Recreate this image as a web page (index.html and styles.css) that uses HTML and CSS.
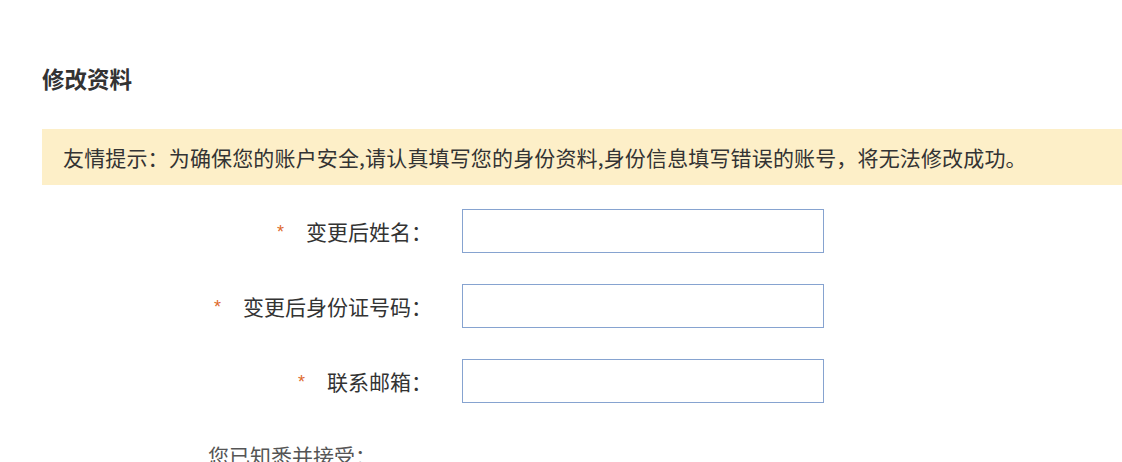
FILE: index.html
```html
<!DOCTYPE html>
<html lang="zh-CN">
<head>
<meta charset="utf-8">
<title>修改资料</title>
<link rel="stylesheet" href="styles.css">
</head>
<body>
<div class="page">
  <h2 class="title">修改资料</h2>
  <div class="notice">友情提示：为确保您的账户安全,请认真填写您的身份资料,身份信息填写错误的账号，将无法修改成功。</div>
  <form class="form">
    <label class="label"><span class="req">*</span>变更后姓名：</label>
    <input class="field" type="text">
    <label class="label"><span class="req">*</span>变更后身份证号码：</label>
    <input class="field" type="text">
    <label class="label"><span class="req">*</span>联系邮箱：</label>
    <input class="field" type="text">
  </form>
  <p class="agree">您已知悉并接受：</p>
</div>
</body>
</html>
```
FILE: styles.css
```css
html, body {
  margin: 0;
  padding: 0;
  background: #ffffff;
}
body {
  font-family: "Noto Sans CJK SC", "Noto Sans", sans-serif;
  color: #333333;
  overflow: hidden;
}
.page {
  padding: 62px 0 0 42px;
}
.title {
  margin: 0;
  font-size: 22.5px;
  line-height: 33px;
  font-weight: 700;
  color: #333333;
}
.notice {
  margin-top: 34px;
  height: 56px;
  display: flex;
  align-items: center;
  padding-left: 21px;
  background: #fdefc8;
  font-size: 21px;
  letter-spacing: 0.15px;
  color: #333333;
  white-space: nowrap;
}
.form {
  margin: 24px 0 0 0;
  display: grid;
  grid-template-columns: 390px 362px;
  grid-auto-rows: 44px;
  column-gap: 30px;
  row-gap: 31px;
}
.label {
  display: flex;
  align-items: center;
  justify-content: flex-end;
  font-size: 21px;
  color: #333333;
}
.req {
  color: #de6a2c;
  font-family: "Liberation Sans", sans-serif;
  font-size: 18px;
  margin-right: 22px;
  align-self: center;
  position: relative;
  top: 1px;
}
.field {
  box-sizing: border-box;
  width: 362px;
  height: 44px;
  margin: 0;
  border: 1px solid #86a3d0;
  background: #ffffff;
  outline: none;
}
.agree {
  margin: 37px 0 0 166px;
  font-size: 21px;
  line-height: 31.5px;
  color: #555555;
}
```
